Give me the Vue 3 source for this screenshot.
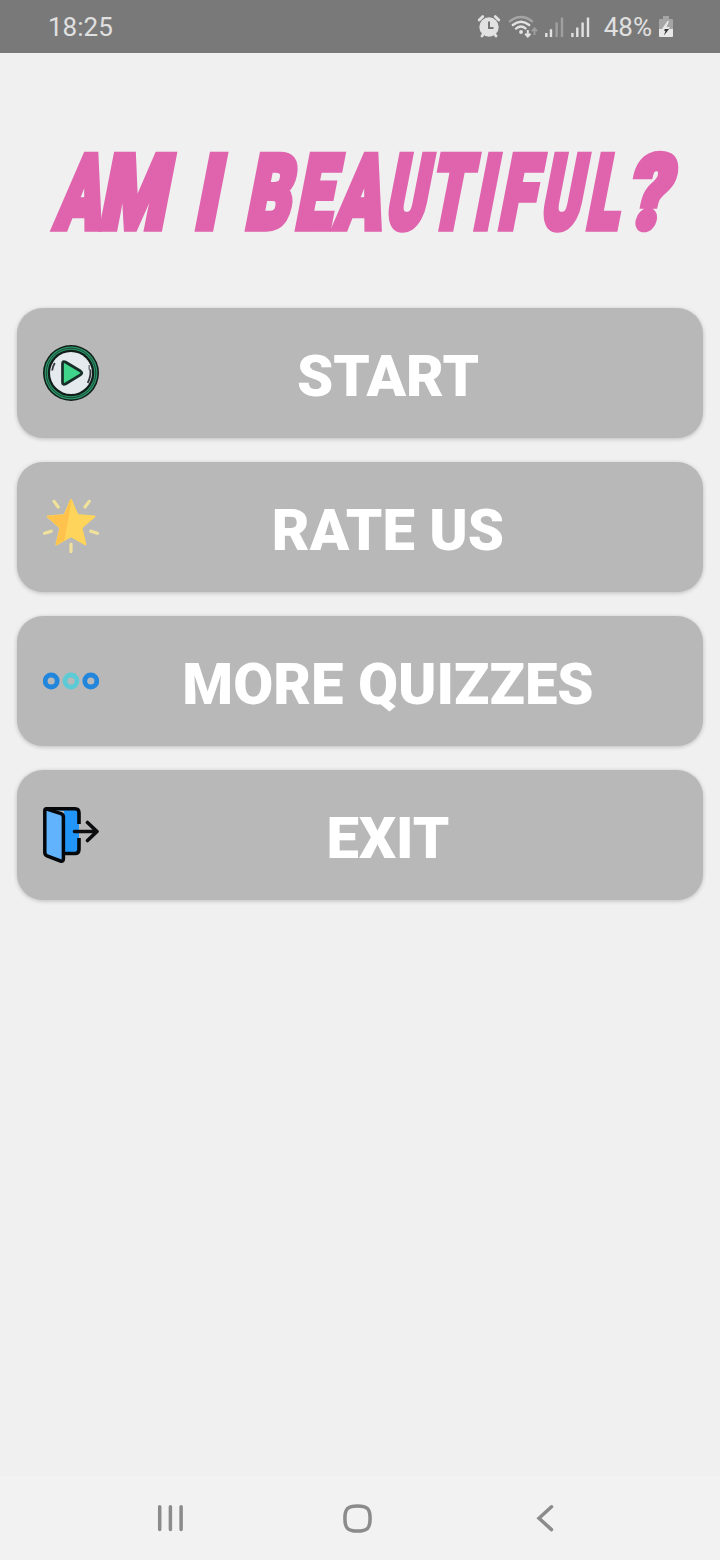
<script setup>
// x and width of every letter, measured on the baseline
const titleWords = [
  {
    text: 'AM',
    letters: [['A', 54, 45], ['M', 98, 66]],
  },
  {
    text: 'I',
    letters: [['I', 193, 23]],
  },
  {
    text: 'BEAUTIFUL',
    letters: [
      ['B', 244, 44],
      ['E', 294, 36],
      ['A', 334, 45],
      ['U', 384, 39],
      ['T', 427, 39],
      ['I', 472, 18],
      ['F', 497, 35],
      ['U', 539, 39],
      ['L', 585, 32],
    ],
  },
  {
    text: '?',
    letters: [['?', 625, 42]],
  },
]

const menuItems = [
  { id: 'start', label: 'START' },
  { id: 'rate', label: 'RATE US' },
  { id: 'more', label: 'MORE QUIZZES' },
  { id: 'exit', label: 'EXIT' },
]
</script>

<template>
  <div class="screen">
    <header class="status-bar">
      <span class="clock">18:25</span>
      <div class="status-icons">
        <svg class="signals" width="120" height="30" viewBox="0 0 120 30" aria-hidden="true">
          <g fill="none" stroke="#e2e2e2" stroke-linecap="round">
            <path stroke-width="2.8" d="M2.2 7l3.6-3.4M18.2 3.6L21.8 7M5 23l2-3M19 23l-2-3" />
          </g>
          <circle cx="12" cy="14" r="9.7" fill="#e2e2e2" />
          <path d="M12 8.5V15h4.5" fill="none" stroke="#777" stroke-width="2" />
          <g fill="none" stroke-width="2.4" stroke-linecap="round">
            <path stroke="#a5a5a5" d="M33 8.2Q44 0 55 8.2" />
            <path stroke="#e2e2e2" d="M35.8 12Q44 5.4 52.2 12M39 15.6Q44 11.6 48.5 15.4" />
          </g>
          <circle cx="44" cy="19" r="1.9" fill="#e2e2e2" />
          <path d="M50.8 17v6M48.2 20.7l2.6 2.8 2.6-2.8" fill="none" stroke="#e2e2e2" stroke-width="2" />
          <path d="M57.5 22v-6M55 18.2l2.5-2.8 2.5 2.8" fill="none" stroke="#a0a0a0" stroke-width="1.8" />
          <path d="M69.3 20v4M74 16.2V24M95.4 20v4M100.3 14.5V24M105.6 9.5V24M111 4.5V24" stroke="#e2e2e2" stroke-width="2.4" />
          <path d="M79.6 9.5V24M85 4.5V24" stroke="#a0a0a0" stroke-width="2.4" />
        </svg>
        <span class="battery-text">48%</span>
        <svg width="14" height="22" viewBox="0 0 14 22" aria-hidden="true">
          <path d="M4 0h6v3h3q1 0 1 1v9H0V4q0-1 1-1h3z" fill="#a5a5a5" />
          <path d="M0 13h14v7q0 1-1 1H1q-1 0-1-1z" fill="#e8e8e8" />
          <path d="M8.5 5L3 13h3.5L5 19l6-8H7.5L10 5z" fill="#e8e8e8" />
          <path d="M5.8 13h4.2L5 19.5l1.5-4.7H5z" fill="#333" />
        </svg>
      </div>
    </header>

    <main class="content">
      <h1 class="title">
        <svg width="720" height="120" viewBox="0 0 720 120">
          <g transform="translate(0 97) skewX(-11)">
            <text v-for="word in titleWords" :key="word.text" y="0"><tspan
              v-for="([letter, x, width], index) in word.letters"
              :key="index"
              :x="x"
              :textLength="width"
              lengthAdjust="spacingAndGlyphs"
            >{{ letter }}</tspan></text>
          </g>
        </svg>
      </h1>

      <nav class="menu">
        <button v-for="item in menuItems" :key="item.id" type="button" class="menu-button">
          <svg v-if="item.id === 'start'" class="menu-icon" viewBox="0 0 56 56">
            <circle cx="28" cy="28" r="28" fill="#101d18" />
            <circle cx="28" cy="28" r="24.8" fill="none" stroke="#2b9569" stroke-width="3.2" />
            <circle cx="28" cy="28" r="24.8" fill="none" stroke="#17352a" stroke-width="0.8" />
            <circle cx="28" cy="28" r="21" fill="#e4eaed" />
            <path d="M19.5 18.7Q19.5 15.6 22.4 17L37.4 26Q40.2 28 37.4 29.8L22.4 39Q19.5 40.2 19.5 37.2z" fill="#3fd58b" stroke="#172d27" stroke-width="2.7" stroke-linejoin="round" />
            <path d="M11.8 18q-2.3 3.6-2.6 7.5M47.3 24.5q.8 7-2.6 13.5" fill="none" stroke="#35363d" stroke-width="1.8" />
            <path d="M46.2 20v5" stroke="#777b80" stroke-width="1.5" />
          </svg>

          <svg v-else-if="item.id === 'rate'" class="menu-icon" viewBox="0 0 56 56">
            <path d="M28 1l6.4 15 17 1.6-13 11.2 4 16.6L28 37.2l-14.6 8.2 4-16.6L4.6 17.6l17-1.6z" fill="#ffd45a" stroke="#ffd45a" stroke-width="2" stroke-linejoin="round" />
            <path d="M28 1l-6.4 15-17 1.6 12.8 11.2-4 16.6 7.6-4.3L28 1z" fill="#ffc24c" stroke="#ffc24c" stroke-linejoin="round" />
            <path d="M11 2.4l4.2 5.6M46.2 2.4L42 8M1.6 34.2l6.6-2M54.4 34.2l-6.6-2M28 45.2v7.4" fill="none" stroke="#f0e29a" stroke-width="3.2" stroke-linecap="round" />
          </svg>

          <svg v-else-if="item.id === 'more'" class="menu-icon" viewBox="0 0 56 56">
            <g fill="none" stroke-width="4.8">
              <circle cx="8.2" cy="28" r="6" stroke="#2186dc" />
              <circle cx="28" cy="28" r="6" stroke="#5ccbd6" />
              <circle cx="47.8" cy="28" r="6" stroke="#2186dc" />
            </g>
          </svg>

          <svg v-else class="menu-icon" viewBox="0 0 56 56">
            <path d="M3 1.8H32Q36 1.8 36 6V42Q36 46 32 46H21V4z" fill="#2196f8" />
            <path d="M36 17V6Q36 1.8 32 1.8H3M36 31V42Q36 46.5 32 46.5H22" fill="none" stroke="#05080b" stroke-width="3.6" />
            <path d="M1.8 3.4Q1.8 1.4 4 2L18 6.6Q20.4 7.5 20.4 10V51.8Q20.4 54.8 17.5 54L4 48.8Q1.8 47.8 1.8 45.2z" fill="#60b3fc" stroke="#05080b" stroke-width="3.5" stroke-linejoin="round" />
            <path d="M31.5 24.5H54M44.5 15.5l9.5 9-9.5 9" fill="none" stroke="#0c0d0e" stroke-width="3.6" stroke-linecap="round" stroke-linejoin="round" />
          </svg>
          <span class="menu-label">{{ item.label }}</span>
        </button>
      </nav>
    </main>

    <footer class="nav-bar">
      <svg width="28" height="28" viewBox="0 0 28 28">
        <path d="M2.7 2.8v22.8M13.4 2.8v22.8M24.1 2.8v22.8" />
      </svg>
      <svg width="30" height="30" viewBox="0 0 30 30">
        <path d="M14.5 2.9C24.2 2.9 27.1 5.6 27.1 15.5S24.2 28.1 14.5 28.1 1.9 25.4 1.9 15.5 4.8 2.9 14.5 2.9z" />
      </svg>
      <svg width="18" height="28" viewBox="0 0 18 28">
        <path d="M15.5 2.8L3 14.2l12.5 11.4" />
      </svg>
    </footer>
  </div>
</template>

<style>
body {
  background: #f0f0f0;
}
</style>

<style scoped>
.screen {
  display: flex;
  flex-direction: column;
  width: 720px;
  height: 1560px;
  overflow: hidden;
  background: #f0f0f0;
  font-family: Roboto, "Liberation Sans", sans-serif;
}

.status-bar {
  display: flex;
  align-items: center;
  justify-content: space-between;
  box-sizing: border-box;
  height: 53px;
  padding: 0 47px 0 48px;
  background: #797979;
  color: #e0e0e0;
}

.clock {
  font-size: 26px;
}

.status-icons {
  display: flex;
  align-items: center;
}

.signals {
  margin: 2px 7px 0 0;
}

.battery-text {
  margin-right: 7px;
  font-size: 26px;
}

.content {
  flex: 1;
}

.title {
  height: 120px;
  margin: 78px 0 57px;
}

.title svg {
  display: block;
  overflow: visible;
}

.title text {
  fill: #df63ad;
  stroke: #df63ad;
  stroke-width: 7.5px;
  font-size: 102px;
  font-weight: 900;
}

.menu {
  display: grid;
  gap: 24px;
  padding: 0 17px;
}

.menu-button {
  display: flex;
  align-items: center;
  height: 130px;
  padding: 0 26px;
  border: 0;
  border-radius: 26px;
  background: #b8b8b8;
  box-shadow: 0 1px 4px rgba(0, 0, 0, 0.22);
  color: #fff;
  font-family: inherit;
}

.menu-icon {
  flex: 0 0 auto;
  width: 56px;
  height: 56px;
}

.menu-label {
  flex: 1;
  padding-top: 6px;
  font-size: 58px;
  font-weight: 900;
  line-height: 68px;
  text-align: center;
  white-space: nowrap;
}

.nav-bar {
  display: grid;
  grid-template-columns: 187px 187px 187px;
  justify-content: center;
  justify-items: center;
  align-items: center;
  height: 84px;
  padding-right: 4px;
  background: #f2f2f2;
}

.nav-bar path {
  fill: none;
  stroke: #8b8b8b;
  stroke-width: 3.5;
  stroke-linecap: round;
}
</style>
